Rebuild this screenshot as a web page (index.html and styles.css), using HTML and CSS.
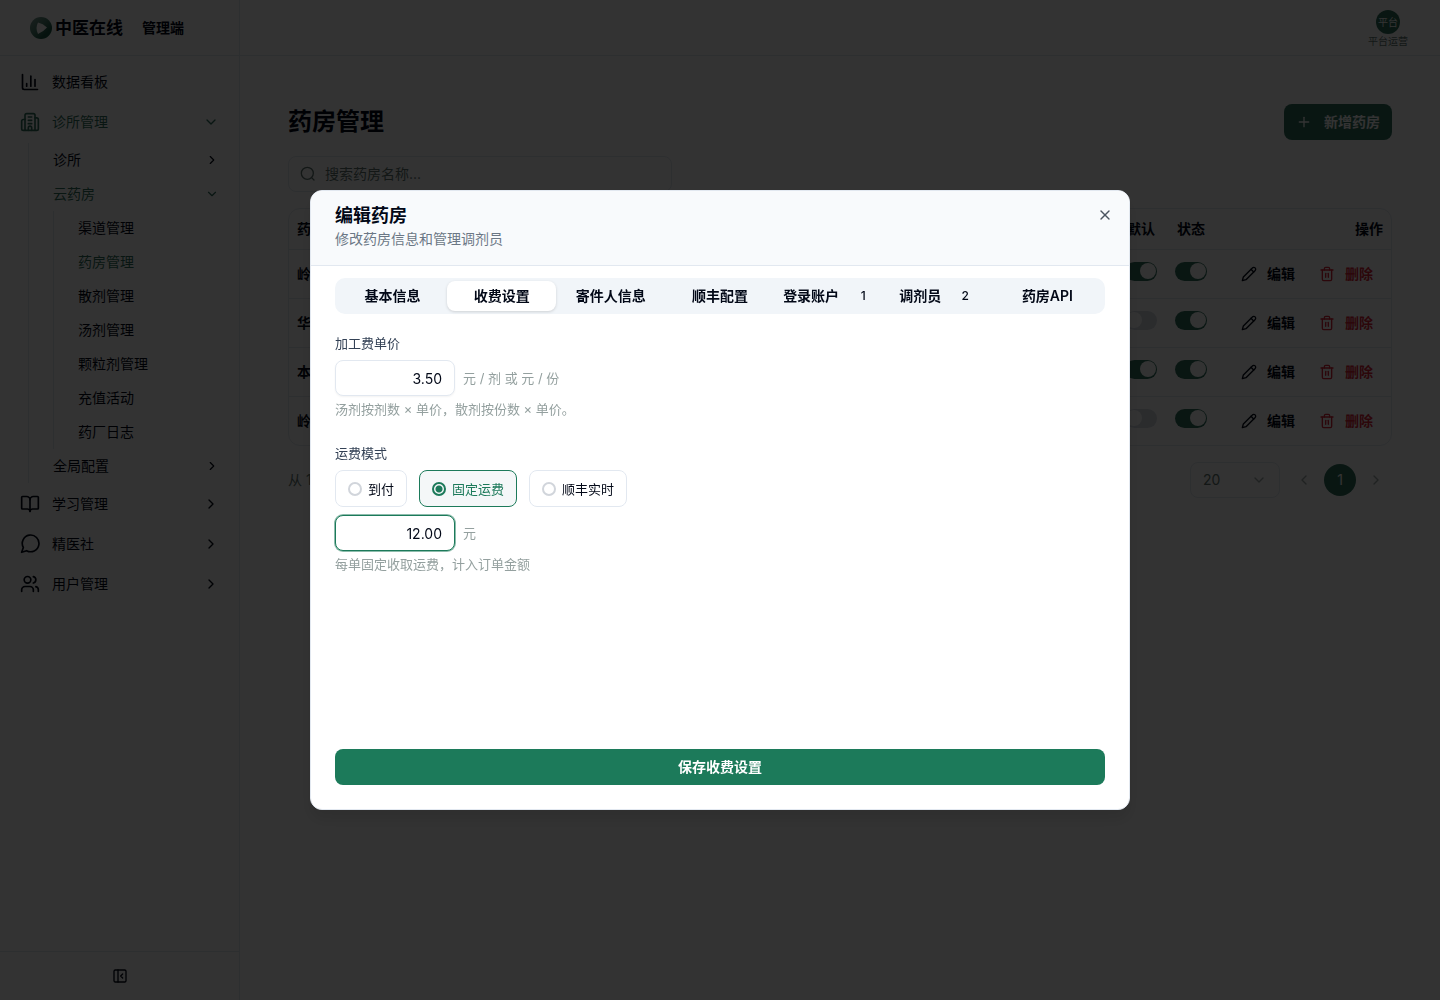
FILE: index.html
```html
<!DOCTYPE html>
<html lang="zh-CN">
<head>
	<meta charset="utf-8">
	<title>药房管理</title>
	<meta name="viewport" content="width=device-width, initial-scale=1.0">
	<link rel="stylesheet" href="styles.css">
</head>
<body>

	<svg class="sprite" width="0" height="0" aria-hidden="true">
		<symbol id="i-right" viewBox="0 0 24 24"><path d="m9 18 6-6-6-6"/></symbol>
		<symbol id="i-left" viewBox="0 0 24 24"><path d="m15 18-6-6 6-6"/></symbol>
		<symbol id="i-down" viewBox="0 0 24 24"><path d="m6 9 6 6 6-6"/></symbol>
		<symbol id="i-pencil" viewBox="0 0 24 24"><path d="M17 3a2.85 2.83 0 1 1 4 4L7.500 20.500 2 22l1.500-5.500Z"/><path d="m15 5 4 4"/></symbol>
		<symbol id="i-trash" viewBox="0 0 24 24"><path d="M3 6h18"/><path d="M19 6v14c0 1-1 2-2 2H7c-1 0-2-1-2-2V6"/><path d="M8 6V4c0-1 1-2 2-2h4c1 0 2 1 2 2v2"/><path d="M10 11v6"/><path d="M14 11v6"/></symbol>
	</svg>

	<div class="app">
		<aside class="sidebar">
			<div class="brand">
				<svg class="logo" viewBox="0 0 22 22" aria-hidden="true">
					<defs>
						<linearGradient id="ring" x1="0" y1="0" x2="1" y2="1">
							<stop offset="0" stop-color="#7f9f96"/>
							<stop offset="0.45" stop-color="#4c8170"/>
							<stop offset="0.75" stop-color="#1a5a46"/>
							<stop offset="1" stop-color="#23604e"/>
						</linearGradient>
					</defs>
					<circle cx="11" cy="11" r="11" fill="url(#ring)"/>
					<path d="M8 5.500 Q13 6.500 17 10.500 Q13 15 8 17 Q5 11 8 5.500Z" fill="#fff"/>
				</svg>
				<span class="brand-name">中医在线</span>
				<span class="brand-tag">管理端</span>
			</div>

			<nav class="nav">
				<a class="nav-item" href="#">
					<svg class="icon" viewBox="0 0 24 24"><path d="M3 3v16a2 2 0 0 0 2 2h16"/><path d="M18 17V9"/><path d="M13 17V5"/><path d="M8 17v-3"/></svg>
					<span>数据看板</span>
				</a>
				<a class="nav-item active" href="#">
					<svg class="icon" viewBox="0 0 24 24"><path d="M6 22V4a2 2 0 0 1 2-2h8a2 2 0 0 1 2 2v18Z"/><path d="M6 9H4a2 2 0 0 0-2 2v9a2 2 0 0 0 2 2h2"/><path d="M18 7h2a2 2 0 0 1 2 2v11a2 2 0 0 1-2 2h-2"/><path d="M10 6h4"/><path d="M10 10h4"/><path d="M10 14h4"/><path d="M10 22v-3a2 2 0 0 1 4 0v3"/></svg>
					<span>诊所管理</span>
					<svg class="chevron"><use href="#i-down"/></svg>
				</a>
				<div class="sub">
					<a class="sub-item" href="#"><span>诊所</span><svg class="chevron small"><use href="#i-right"/></svg></a>
					<a class="sub-item active" href="#"><span>云药房</span><svg class="chevron small"><use href="#i-down"/></svg></a>
					<div class="sub-inner">
						<a class="sub-item" href="#">渠道管理</a>
						<a class="sub-item active" href="#">药房管理</a>
						<a class="sub-item" href="#">散剂管理</a>
						<a class="sub-item" href="#">汤剂管理</a>
						<a class="sub-item" href="#">颗粒剂管理</a>
						<a class="sub-item" href="#">充值活动</a>
						<a class="sub-item" href="#">药厂日志</a>
					</div>
					<a class="sub-item" href="#"><span>全局配置</span><svg class="chevron small"><use href="#i-right"/></svg></a>
				</div>
				<a class="nav-item" href="#">
					<svg class="icon" viewBox="0 0 24 24"><path d="M12 7v14"/><path d="M3 18a1 1 0 0 1-1-1V4a1 1 0 0 1 1-1h5a4 4 0 0 1 4 4 4 4 0 0 1 4-4h5a1 1 0 0 1 1 1v13a1 1 0 0 1-1 1h-6a3 3 0 0 0-3 3 3 3 0 0 0-3-3z"/></svg>
					<span>学习管理</span>
					<svg class="chevron"><use href="#i-right"/></svg>
				</a>
				<a class="nav-item" href="#">
					<svg class="icon" viewBox="0 0 24 24"><path d="M7.900 20A10 10 0 1 0 4 16.100L2 22Z"/></svg>
					<span>精医社</span>
					<svg class="chevron"><use href="#i-right"/></svg>
				</a>
				<a class="nav-item" href="#">
					<svg class="icon" viewBox="0 0 24 24"><path d="M16 21v-2a4 4 0 0 0-4-4H6a4 4 0 0 0-4 4v2"/><circle cx="9" cy="7" r="4"/><path d="M22 21v-2a4 4 0 0 0-3-3.870"/><path d="M16 3.130a4 4 0 0 1 0 7.750"/></svg>
					<span>用户管理</span>
					<svg class="chevron"><use href="#i-right"/></svg>
				</a>
			</nav>

			<div class="sidebar-foot">
				<button class="icon-btn" aria-label="收起">
					<svg viewBox="0 0 24 24"><rect x="3" y="3" width="18" height="18" rx="2"/><path d="M9 3v18"/><path d="m16 15-3-3 3-3"/></svg>
				</button>
			</div>
		</aside>

		<div class="main">
			<header class="topbar">
				<div class="user">
					<span class="avatar">平台</span>
					<span class="user-name">平台运营</span>
				</div>
			</header>

			<main class="content">
				<div class="page-head">
					<h1>药房管理</h1>
					<button class="btn-primary btn-add">
						<svg viewBox="0 0 24 24"><path d="M5 12h14"/><path d="M12 5v14"/></svg>
						新增药房
					</button>
				</div>

				<label class="search">
					<svg viewBox="0 0 24 24"><circle cx="11" cy="11" r="9"/><path d="m21 21-3.600-3.600"/></svg>
					<input type="text" placeholder="搜索药房名称..." aria-label="搜索药房名称">
				</label>

				<div class="table-box">
					<table>
						<thead>
							<tr>
								<th>药</th>
								<th class="col-switch">默认</th>
								<th class="col-switch">状态</th>
								<th class="col-action">操作</th>
							</tr>
						</thead>
						<tbody>
							<tr>
								<td>岭</td>
								<td class="col-switch"><input class="switch" type="checkbox" aria-label="默认" checked></td>
								<td class="col-switch"><input class="switch" type="checkbox" aria-label="状态" checked></td>
								<td class="col-action">
									<div class="actions">
										<button class="link"><svg><use href="#i-pencil"/></svg>编辑</button>
										<button class="link danger"><svg><use href="#i-trash"/></svg>删除</button>
									</div>
								</td>
							</tr>
							<tr>
								<td>华</td>
								<td class="col-switch"><input class="switch" type="checkbox" aria-label="默认"></td>
								<td class="col-switch"><input class="switch" type="checkbox" aria-label="状态" checked></td>
								<td class="col-action">
									<div class="actions">
										<button class="link"><svg><use href="#i-pencil"/></svg>编辑</button>
										<button class="link danger"><svg><use href="#i-trash"/></svg>删除</button>
									</div>
								</td>
							</tr>
							<tr>
								<td>本</td>
								<td class="col-switch"><input class="switch" type="checkbox" aria-label="默认" checked></td>
								<td class="col-switch"><input class="switch" type="checkbox" aria-label="状态" checked></td>
								<td class="col-action">
									<div class="actions">
										<button class="link"><svg><use href="#i-pencil"/></svg>编辑</button>
										<button class="link danger"><svg><use href="#i-trash"/></svg>删除</button>
									</div>
								</td>
							</tr>
							<tr>
								<td>岭</td>
								<td class="col-switch"><input class="switch" type="checkbox" aria-label="默认"></td>
								<td class="col-switch"><input class="switch" type="checkbox" aria-label="状态" checked></td>
								<td class="col-action">
									<div class="actions">
										<button class="link"><svg><use href="#i-pencil"/></svg>编辑</button>
										<button class="link danger"><svg><use href="#i-trash"/></svg>删除</button>
									</div>
								</td>
							</tr>
						</tbody>
					</table>
				</div>

				<div class="pager">
					<span class="total">从 1</span>
					<div class="page-size">
						<select aria-label="每页条数">
							<option>20</option>
						</select>
						<svg><use href="#i-down"/></svg>
					</div>
					<div class="pages">
						<button class="page-arrow" aria-label="上一页"><svg><use href="#i-left"/></svg></button>
						<button class="page-num">1</button>
						<button class="page-arrow" aria-label="下一页"><svg><use href="#i-right"/></svg></button>
					</div>
				</div>
			</main>
		</div>
	</div>

	<div class="overlay">
		<div class="modal" role="dialog" aria-labelledby="modal-title">
			<div class="modal-head">
				<div>
					<h2 id="modal-title">编辑药房</h2>
					<p>修改药房信息和管理调剂员</p>
				</div>
				<button class="icon-btn close" aria-label="关闭">
					<svg viewBox="0 0 24 24"><path d="M18 6 6 18"/><path d="m6 6 12 12"/></svg>
				</button>
			</div>

			<form class="modal-body">
				<div class="tabs" role="tablist">
					<button type="button" role="tab">基本信息</button>
					<button type="button" role="tab" class="selected" aria-selected="true">收费设置</button>
					<button type="button" role="tab">寄件人信息</button>
					<button type="button" role="tab">顺丰配置</button>
					<button type="button" role="tab">登录账户<span class="count">1</span></button>
					<button type="button" role="tab">调剂员<span class="count">2</span></button>
					<button type="button" role="tab">药房API</button>
				</div>

				<div class="field">
					<label class="field-label" for="process-fee">加工费单价</label>
					<div class="input-row">
						<input type="text" id="process-fee" class="number" value="3.50">
						<span class="unit">元 / 剂 或 元 / 份</span>
					</div>
					<p class="help">汤剂按剂数 × 单价，散剂按份数 × 单价。</p>
				</div>

				<div class="field">
					<label class="field-label" for="ship-fee">运费模式</label>
					<div class="radios">
						<label class="radio"><input type="radio" name="ship">到付</label>
						<label class="radio checked"><input type="radio" name="ship" checked>固定运费</label>
						<label class="radio"><input type="radio" name="ship">顺丰实时</label>
					</div>
					<div class="input-row">
						<input type="text" id="ship-fee" class="number focused" value="12.00">
						<span class="unit">元</span>
					</div>
					<p class="help">每单固定收取运费，计入订单金额</p>
				</div>

				<button type="button" class="btn-primary save">保存收费设置</button>
			</form>
		</div>
	</div>

</body>
</html>
```
FILE: styles.css
```css
*{
	box-sizing: border-box;
}
html,body{
	height: 100%;
}
body{
	margin: 0px;
	font-family: Inter, "Noto Sans CJK SC", sans-serif;
	font-size: 14px;
	line-height: 20px;
	color: #020817;
	background: white;
}
h1,h2,p{
	margin: 0px;
}
a{
	color: inherit;
	text-decoration: none;
}
button,input,select{
	font: inherit;
	color: inherit;
}
button{
	border: none;
	background: none;
	padding: 0px;
	cursor: pointer;
}
svg{
	width: 16px;
	height: 16px;
	flex-shrink: 0;
	fill: none;
	stroke: currentColor;
	stroke-width: 2;
	stroke-linecap: round;
	stroke-linejoin: round;
}
.sprite{
	position: absolute;
	width: 0px;
	height: 0px;
}

.app{
	--primary: #306f5d;
	--muted: #5f7671;
	display: flex;
	min-height: 100%;
}

/* sidebar */
.sidebar{
	width: 240px;
	flex-shrink: 0;
	display: flex;
	flex-direction: column;
	border-right: 1px solid #e2e8f0;
}
.brand{
	height: 56px;
	display: flex;
	align-items: center;
	padding-left: 30px;
	border-bottom: 1px solid #e2e8f0;
}
.logo{
	width: 22px;
	height: 22px;
	stroke: none;
}
.brand-name{
	margin-left: 3px;
	font-size: 17px;
	font-weight: 600;
}
.brand-tag{
	margin-left: 19px;
	font-weight: 600;
}
.nav{
	flex: 1;
	padding: 6px 0px;
}
.nav-item{
	height: 40px;
	display: flex;
	align-items: center;
	gap: 12px;
	padding: 0px 20px;
}
.nav .icon{
	width: 20px;
	height: 20px;
}
.nav .active{
	color: var(--primary);
}
.nav .chevron{
	margin-left: auto;
}
.nav .small{
	width: 14px;
	height: 14px;
}
.sub{
	margin: 1px 0px 1px 28px;
	padding-left: 24px;
	border-left: 1px solid #e2e8f0;
}
.sub-inner{
	padding-left: 24px;
	border-left: 1px solid #e2e8f0;
}
.sub-item{
	height: 34px;
	display: flex;
	align-items: center;
	padding-right: 20px;
}
.sidebar-foot{
	height: 49px;
	display: flex;
	justify-content: center;
	align-items: center;
	border-top: 1px solid #e2e8f0;
}
.icon-btn{
	display: flex;
}

/* top bar */
.main{
	flex: 1;
	min-width: 0px;
}
.topbar{
	height: 56px;
	display: flex;
	justify-content: flex-end;
	align-items: flex-end;
	padding: 0px 32px 7px;
	border-bottom: 1px solid #e2e8f0;
}
.user{
	display: flex;
	flex-direction: column;
	align-items: center;
	font-size: 10px;
	line-height: 14px;
	color: var(--muted);
}
.avatar{
	width: 24px;
	height: 24px;
	display: flex;
	justify-content: center;
	align-items: center;
	border-radius: 50%;
	background: var(--primary);
	color: white;
}

/* page */
.content{
	display: flex;
	flex-direction: column;
	gap: 16px;
	padding: 48px;
}
.page-head{
	display: flex;
	justify-content: space-between;
	align-items: center;
}
.page-head h1{
	font-size: 24px;
	line-height: 32px;
	font-weight: 700;
}
.btn-primary{
	height: 36px;
	display: flex;
	justify-content: center;
	align-items: center;
	border-radius: 8px;
	background: #1c7a5a;
	color: white;
	font-weight: 600;
}
.btn-add{
	gap: 12px;
	padding: 0px 12px;
	background: var(--primary);
}
.search{
	width: 384px;
	height: 36px;
	display: flex;
	align-items: center;
	gap: 9px;
	padding: 0px 11px;
	border: 1px solid #e2e8f0;
	border-radius: 8px;
	color: var(--muted);
}
.search input{
	flex: 1;
	min-width: 0px;
	padding: 0px;
	border: none;
	outline: none;
	background: none;
}
.search input::placeholder{
	color: var(--muted);
}

.table-box{
	border: 1px solid #e2e8f0;
	border-radius: 12px;
}
table{
	width: 100%;
	border-collapse: collapse;
	table-layout: fixed;
	font-weight: 600;
}
th{
	height: 40px;
	padding: 0px 8px;
	text-align: left;
	font-weight: 600;
}
td{
	height: 49px;
	padding: 0px 8px;
}
tbody tr{
	border-top: 1px solid #e2e8f0;
}
.col-switch{
	width: 50px;
	text-align: center;
}
.col-action{
	width: 175px;
	text-align: right;
}
.switch{
	appearance: none;
	display: block;
	width: 32px;
	height: 19px;
	margin: 0px auto 5px;
	padding: 1px;
	border-radius: 10px;
	background: #d5dae2;
}
.switch::before{
	content: "";
	display: block;
	width: 16px;
	height: 16px;
	border-radius: 50%;
	background: white;
}
.switch:checked{
	background: var(--primary);
}
.switch:checked::before{
	margin-left: auto;
}
.actions{
	display: flex;
	justify-content: flex-end;
	gap: 4px;
}
.link{
	display: flex;
	align-items: center;
	gap: 10px;
	padding: 0px 10px;
	font-weight: 600;
}
.danger{
	color: #dc2638;
}

.pager{
	display: flex;
	align-items: center;
	color: var(--muted);
}
.page-size{
	display: flex;
	align-items: center;
	width: 90px;
	height: 36px;
	margin-left: auto;
	padding: 0px 12px;
	border: 1px solid #e2e8f0;
	border-radius: 8px;
}
.page-size select{
	appearance: none;
	flex: 1;
	border: none;
	background: none;
	outline: none;
}
.page-size svg{
	opacity: 0.6;
}
.pages{
	display: flex;
	align-items: center;
	margin-left: 8px;
}
.page-arrow{
	width: 32px;
	height: 32px;
	margin: 0px;
	display: flex;
	justify-content: center;
	align-items: center;
	opacity: 0.6;
}
.page-num{
	width: 32px;
	height: 32px;
	margin: 0px 4px;
	border-radius: 50%;
	background: var(--primary);
	color: white;
}

/* modal */
.overlay{
	position: fixed;
	inset: 0px;
	display: flex;
	justify-content: center;
	align-items: center;
	background: rgba(0,0,0,0.8);
}
.modal{
	width: 100%;
	max-width: 820px;
	min-height: 62vh;
	display: flex;
	flex-direction: column;
	overflow: hidden;
	border: 1px solid #e2e8f0;
	border-radius: 12px;
	background: white;
	box-shadow: 0px 10px 15px rgba(0,0,0,0.1);
}
.modal-head{
	display: flex;
	justify-content: space-between;
	align-items: flex-start;
	padding: 12px 16px 16px 24px;
	border-bottom: 1px solid #e2e8f0;
	background: #f8fafc;
}
.modal-head h2{
	font-size: 18px;
	line-height: 26px;
	font-weight: 600;
}
.modal-head p{
	color: #6b7785;
}
.close{
	margin-top: 4px;
	color: #4b5560;
}
.modal-body{
	flex: 1;
	display: flex;
	flex-direction: column;
	padding: 12px 24px 24px;
}
.tabs{
	display: grid;
	grid-template-columns: repeat(7,1fr);
	height: 36px;
	margin-bottom: 20px;
	padding: 3px;
	border-radius: 10px;
	background: #f1f5f9;
}
.tabs button{
	display: flex;
	justify-content: center;
	align-items: center;
	border-radius: 8px;
	white-space: nowrap;
	font-weight: 600;
}
.tabs .selected{
	background: white;
	box-shadow: 0px 1px 3px rgba(0,0,0,0.15);
}
.count{
	width: 24px;
	margin-left: 12px;
	font-size: 12px;
	font-weight: 500;
}

.field{
	display: flex;
	flex-direction: column;
	gap: 8px;
	margin-bottom: 26px;
	font-size: 13px;
}
.field-label{
	line-height: 18px;
	color: #334155;
}
.input-row{
	display: flex;
	align-items: center;
	gap: 8px;
}
.number{
	width: 120px;
	height: 36px;
	padding: 0px 12px;
	border: 1px solid #e2e8f0;
	border-radius: 8px;
	outline: none;
	background: white;
	box-shadow: 0px 1px 2px rgba(0,0,0,0.05);
	font-size: 14px;
	text-align: right;
}
.focused{
	border-color: #1c7a5a;
	box-shadow: 0px 0px 0px 1px rgba(28,122,90,0.5);
}
.unit,.help{
	color: #94a09f;
}
.help{
	margin-top: -4px;
	line-height: 18px;
}
.radios{
	display: flex;
	gap: 12px;
}
.radio{
	height: 37px;
	display: flex;
	align-items: center;
	gap: 6px;
	padding: 0px 12px;
	border: 1px solid #e2e8f0;
	border-radius: 8px;
}
.radio input{
	appearance: none;
	width: 14px;
	height: 14px;
	margin: 0px;
	border: 2px solid #d1d5db;
	border-radius: 50%;
}
.checked{
	border-color: #1c7a5a;
	background: #f4f7f8;
	color: #1c7a5a;
}
.radio input:checked{
	border-color: #1c7a5a;
	background: radial-gradient(#1c7a5a 3px,transparent 4px);
}
.save{
	width: 100%;
	margin-top: auto;
}
```
